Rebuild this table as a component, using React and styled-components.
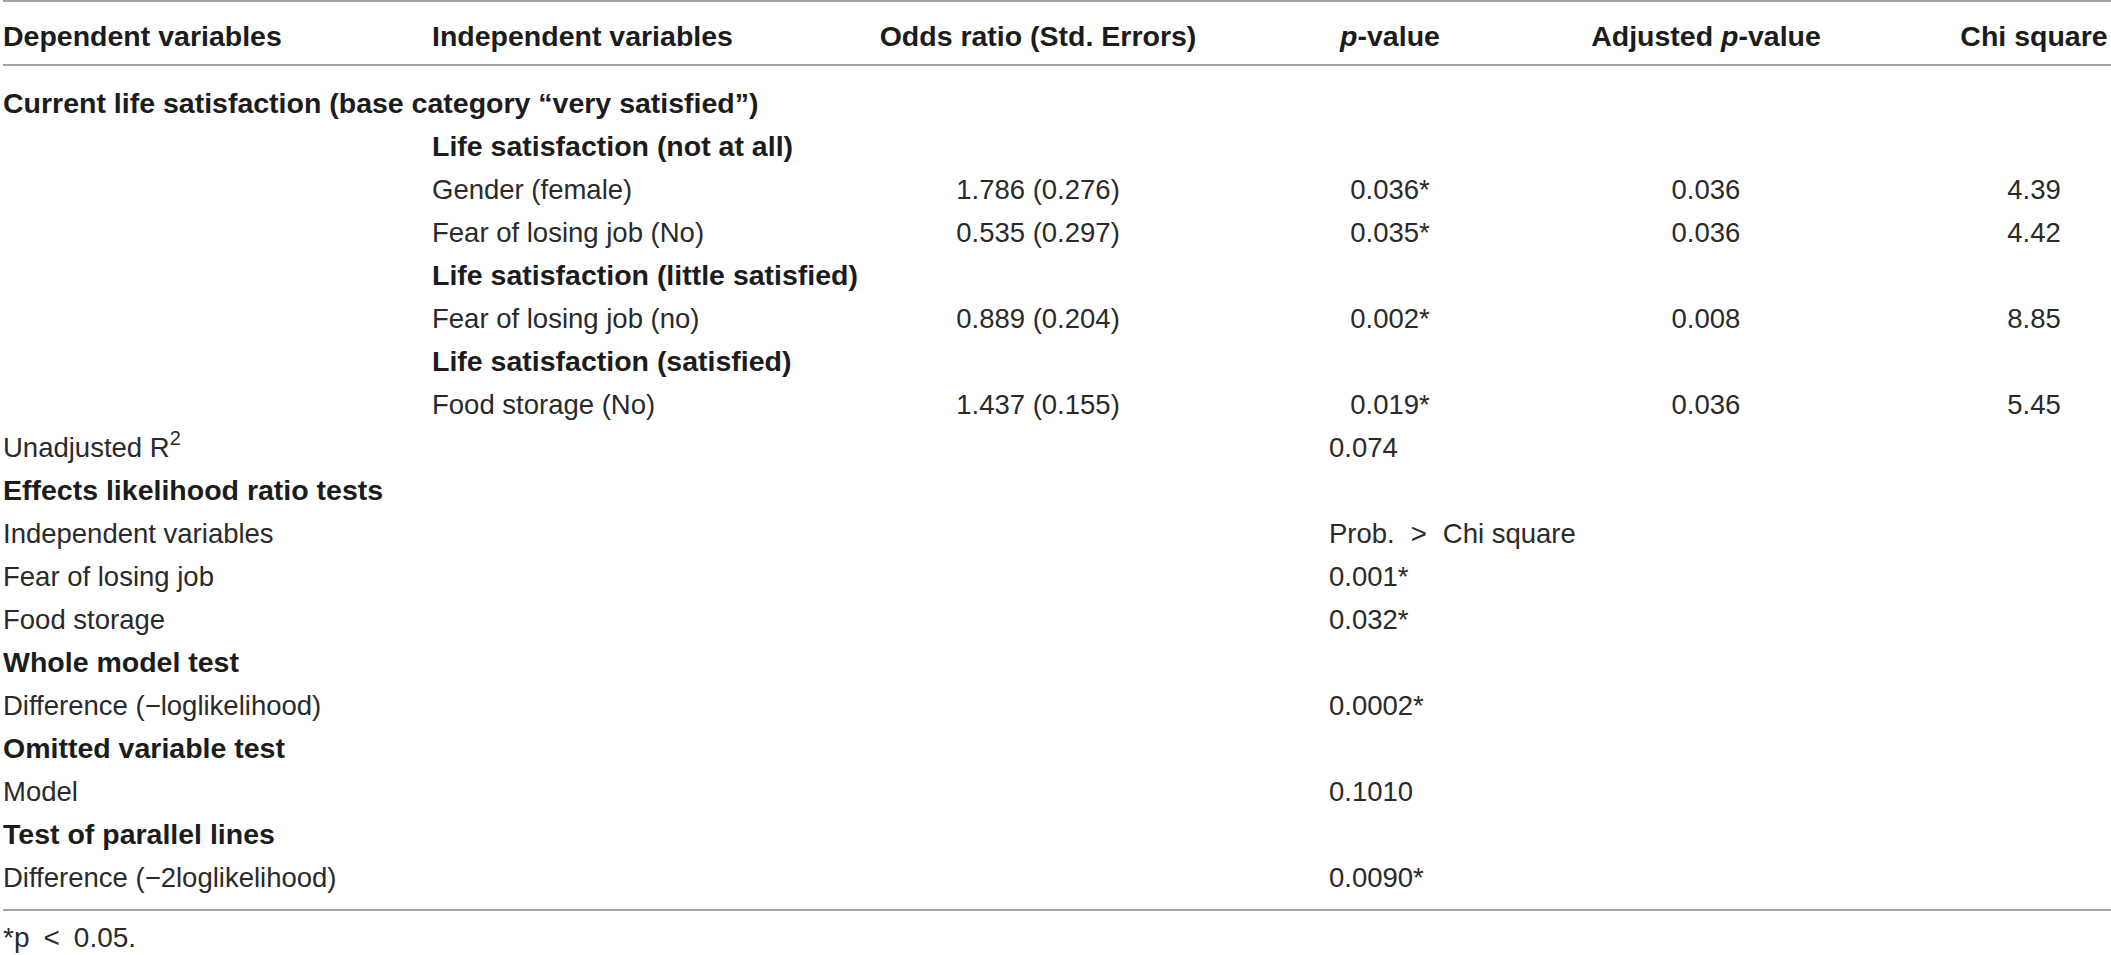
import React from 'react'
import styled, { createGlobalStyle } from 'styled-components'

const GlobalStyle = createGlobalStyle`
  html, body {
    margin: 0;
    padding: 0;
    background: #fff;
    overflow: hidden;
  }
  body {
    font-family: 'Liberation Sans', Arial, sans-serif;
    color: #1c1c1c;
  }
`

const Page = styled.div`
  width: 100%;
  overflow: hidden;
  padding-left: 3px;
  box-sizing: border-box;
`

const Table = styled.table`
  width: 2227px;
  table-layout: fixed;
  border-collapse: collapse;
  tbody tr:first-child td {
    padding-top: 16px;
  }
  tbody tr:last-child {
    border-bottom: 2px solid #a3a3a3;
  }
  tbody tr:last-child td {
    padding-bottom: 10px;
  }
`

const HeadRow = styled.tr`
  border-top: 2px solid #a3a3a3;
  border-bottom: 2px solid #a3a3a3;
`

const HeadCell = styled.th`
  height: 56px;
  padding: 6px 0 0;
  font-size: 28.5px;
  font-weight: 700;
  white-space: nowrap;
  text-align: ${p => p.$align || 'left'};
  em {
    font-style: italic;
  }
`

const Cell = styled.td`
  height: 43px;
  padding: 0;
  padding-left: ${p => p.$lead || 0}px;
  vertical-align: middle;
  white-space: nowrap;
  text-align: ${p => p.$align || 'left'};
  font-size: ${p => (p.$bold ? '28.5px' : '27.5px')};
  font-weight: ${p => (p.$bold ? 700 : 400)};
  color: ${p => (p.$bold ? '#1c1c1c' : '#2a2a2a')};
`

const Sup = styled.sup`
  font-size: 20px;
  line-height: 0;
  vertical-align: 12px;
`

const Op = styled.span`
  margin: 0 ${p => p.$gap || 5}px;
`

const Note = styled.p`
  margin: 0;
  padding-top: 11px;
  font-size: 28px;
  color: #2a2a2a;
`

const rows = [
  { kind: 'group', label: 'Current life satisfaction (base category “very satisfied”)' },
  { kind: 'sub', label: 'Life satisfaction (not at all)' },
  { kind: 'data', iv: 'Gender (female)', odds: '1.786 (0.276)', p: '0.036*', adj: '0.036', chi: '4.39' },
  { kind: 'data', iv: 'Fear of losing job (No)', odds: '0.535 (0.297)', p: '0.035*', adj: '0.036', chi: '4.42' },
  { kind: 'sub', label: 'Life satisfaction (little satisfied)' },
  { kind: 'data', iv: 'Fear of losing job (no)', odds: '0.889 (0.204)', p: '0.002*', adj: '0.008', chi: '8.85' },
  { kind: 'sub', label: 'Life satisfaction (satisfied)' },
  { kind: 'data', iv: 'Food storage (No)', odds: '1.437 (0.155)', p: '0.019*', adj: '0.036', chi: '5.45' },
  { kind: 'stat', label: <>Unadjusted R<Sup>2</Sup></>, value: '0.074' },
  { kind: 'group', label: 'Effects likelihood ratio tests' },
  { kind: 'stat', label: 'Independent variables', value: <>Prob.<Op $gap={16}>&gt;</Op>Chi square</> },
  { kind: 'stat', label: 'Fear of losing job', value: '0.001*' },
  { kind: 'stat', label: 'Food storage', value: '0.032*' },
  { kind: 'group', label: 'Whole model test' },
  { kind: 'stat', label: 'Difference (−loglikelihood)', value: '0.0002*' },
  { kind: 'group', label: 'Omitted variable test' },
  { kind: 'stat', label: 'Model', value: '0.1010' },
  { kind: 'group', label: 'Test of parallel lines' },
  { kind: 'stat', label: 'Difference (−2loglikelihood)', value: '0.0090*' },
]

const Row = ({ row }) => {
  if (row.kind === 'group') {
    return (
      <tr>
        <Cell $bold colSpan={6}>{row.label}</Cell>
      </tr>
    )
  }
  if (row.kind === 'sub') {
    return (
      <tr>
        <Cell />
        <Cell $bold colSpan={5}>{row.label}</Cell>
      </tr>
    )
  }
  if (row.kind === 'stat') {
    return (
      <tr>
        <Cell colSpan={3}>{row.label}</Cell>
        <Cell $lead={123}>{row.value}</Cell>
        <Cell colSpan={2} />
      </tr>
    )
  }
  return (
    <tr>
      <Cell />
      <Cell>{row.iv}</Cell>
      <Cell $align="center">{row.odds}</Cell>
      <Cell $align="center">{row.p}</Cell>
      <Cell $align="center">{row.adj}</Cell>
      <Cell $align="center">{row.chi}</Cell>
    </tr>
  )
}

export default function App() {
  return (
    <Page>
      <GlobalStyle />
      <Table>
        <colgroup>
          <col style={{ width: 429 }} />
          <col style={{ width: 438 }} />
          <col style={{ width: 336 }} />
          <col style={{ width: 368 }} />
          <col style={{ width: 264 }} />
          <col style={{ width: 392 }} />
        </colgroup>
        <thead>
          <HeadRow>
            <HeadCell>Dependent variables</HeadCell>
            <HeadCell>Independent variables</HeadCell>
            <HeadCell $align="center">Odds ratio (Std. Errors)</HeadCell>
            <HeadCell $align="center"><em>p</em>-value</HeadCell>
            <HeadCell $align="center">Adjusted <em>p</em>-value</HeadCell>
            <HeadCell $align="center">Chi square</HeadCell>
          </HeadRow>
        </thead>
        <tbody>
          {rows.map((row, i) => (
            <Row key={i} row={row} />
          ))}
        </tbody>
      </Table>
      <Note>
        *p<Op $gap={14}>&lt;</Op>0.05.
      </Note>
    </Page>
  )
}
